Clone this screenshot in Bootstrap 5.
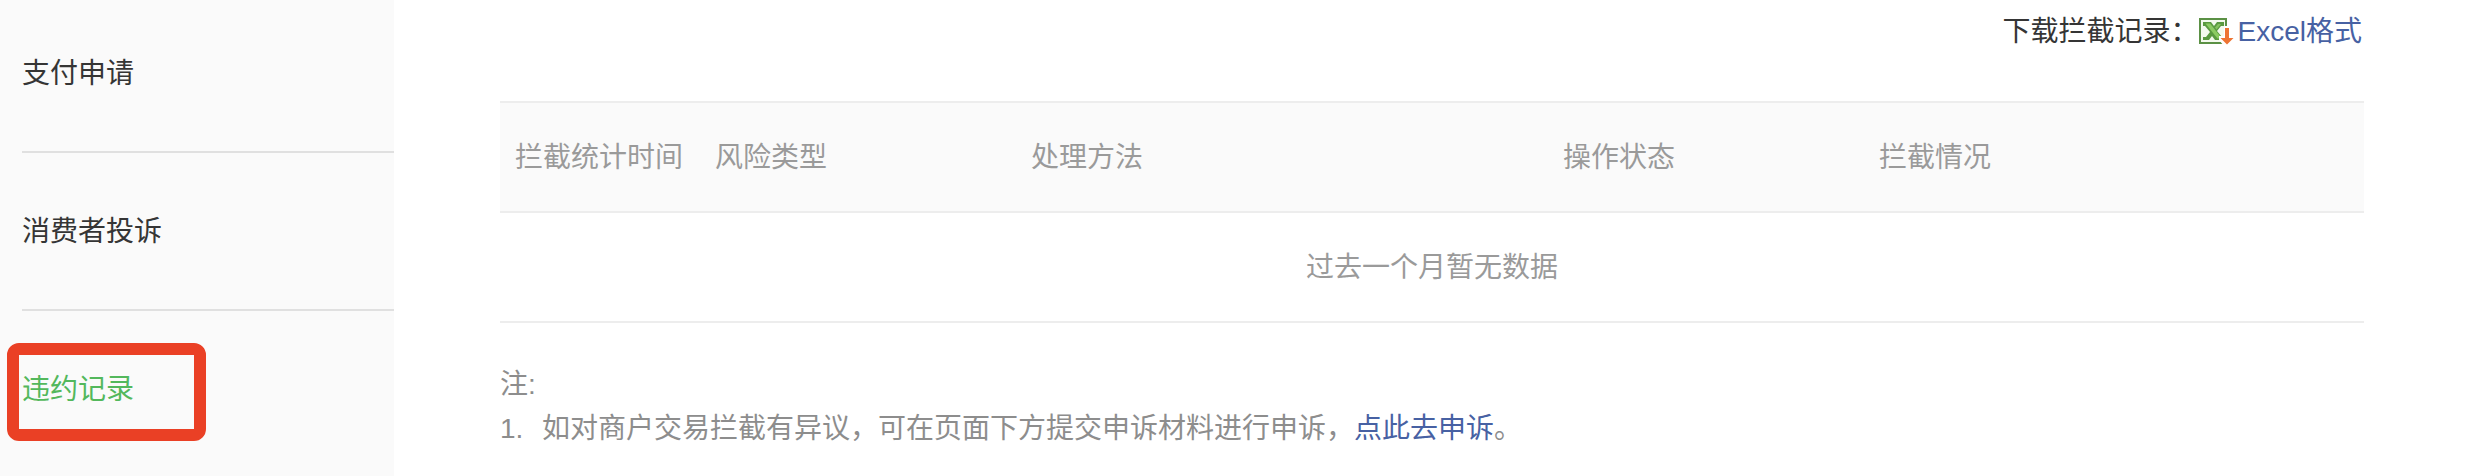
<!DOCTYPE html>
<html lang="zh-CN">
<head>
<meta charset="utf-8">
<meta name="viewport" content="width=device-width, initial-scale=1">
<title>违约记录</title>
<link href="https://cdn.jsdelivr.net/npm/bootstrap@5.3.0/dist/css/bootstrap.min.css" rel="stylesheet">
<style>
  body {
    font-family: "Liberation Sans", "Noto Sans CJK SC", sans-serif;
    font-size: 28px;
    line-height: 44px;
    color: #353535;
    background: #fff;
  }
  a { color: #4761a3; text-decoration: none; }
  .side-menu { width: 394px; padding-left: 22px; background: #fafafa; }
  .side-menu .nav-link {
    padding: 57px 0 55px;
    color: #353535;
    border-bottom: 2px solid #e0e0e0;
  }
  .side-menu .nav-link:first-child { padding-top: 52px; }
  .side-menu .nav-link:last-child { border-bottom: 0; }
  .side-menu .nav-link.active { color: #53b85c; }
  .callout-frame {
    left: -15px;
    top: 32px;
    width: 199px;
    height: 98px;
    border: 12px solid #ea4025;
    border-radius: 12px;
    pointer-events: none;
  }
  .page-main { padding: 10px 112px 0 106px; }
  .download-bar { margin-bottom: 47px; padding-right: 2px; }
  .excel-icon { width: 35px; height: 28px; margin-right: 4px; }
  .record-table {
    table-layout: fixed;
    border-collapse: separate;
    border-spacing: 0;
    border-top: 2px solid #ededed;
    margin-bottom: 40px;
  }
  .record-table > :not(caption) > * > * {
    padding: 33px 15px 31px;
    color: #9a9a9a;
    font-weight: 400;
    border-bottom: 2px solid #ededed;
  }
  .record-table > thead > tr > th { background: #fafafa; }
  .col-time { width: 200px; }
  .col-mid { width: 316px; }
  .col-method { width: 532px; }
  .notes { color: #8d8d8d; }
  .note-index { width: 42px; }
</style>
</head>
<body>
<div class="d-flex min-vh-100">
  <nav class="side-menu nav flex-column flex-nowrap flex-shrink-0" aria-label="侧栏">
    <a class="nav-link" href="#">支付申请</a>
    <a class="nav-link" href="#">消费者投诉</a>
    <a class="nav-link active position-relative" href="#" aria-current="page">违约记录<span class="callout-frame position-absolute"></span></a>
  </nav>

  <main class="page-main flex-grow-1">
    <div class="download-bar d-flex justify-content-end align-items-center">
      <span>下载拦截记录：</span>
      <a class="d-flex align-items-center" href="#">
        <svg class="excel-icon" viewBox="0 0 35 28" aria-hidden="true">
          <rect x="1" y="1" width="26" height="24" fill="#f4faee" stroke="#5b9145" stroke-width="2"/>
          <path d="M4 4h8l3 4 3-4h7v4h-3l-4 5 5 6h2v3h-9l-3-4-3 4H4v-3h3l4-5-5-6H4z" fill="#5a9a40"/>
          <path d="M6.500 5.500h4.500l12 15h-4.500z" fill="#8ccb62"/>
          <path d="M19 6h3l-4.500 5.500-1.500-2z" fill="#86c25f"/>
          <path d="M25 8h7v10h3v4l-6 6h-4l-5-6v-4h5z" fill="#fff"/>
          <path d="M26 10h4v10h4.500l-6.500 6.500-6.500-6.500H26z" fill="#ee7433"/>
        </svg>
        <span>Excel格式</span>
      </a>
    </div>

    <table class="record-table table">
      <colgroup>
        <col class="col-time"><col class="col-mid"><col class="col-method"><col class="col-mid"><col>
      </colgroup>
      <thead>
        <tr>
          <th scope="col" class="text-nowrap">拦截统计时间</th>
          <th scope="col">风险类型</th>
          <th scope="col">处理方法</th>
          <th scope="col">操作状态</th>
          <th scope="col">拦截情况</th>
        </tr>
      </thead>
      <tbody>
        <tr><td colspan="5" class="text-center">过去一个月暂无数据</td></tr>
      </tbody>
    </table>

    <section class="notes">
      <p class="mb-0">注:</p>
      <ol class="list-unstyled mb-0">
        <li class="d-flex"><span class="note-index flex-shrink-0">1.</span><span>如对商户交易拦截有异议，可在页面下方提交申诉材料进行申诉，<a href="#">点此去申诉</a>。</span></li>
      </ol>
    </section>
  </main>
</div>
<script src="https://cdn.jsdelivr.net/npm/bootstrap@5.3.0/dist/js/bootstrap.bundle.min.js"></script>
</body>
</html>
